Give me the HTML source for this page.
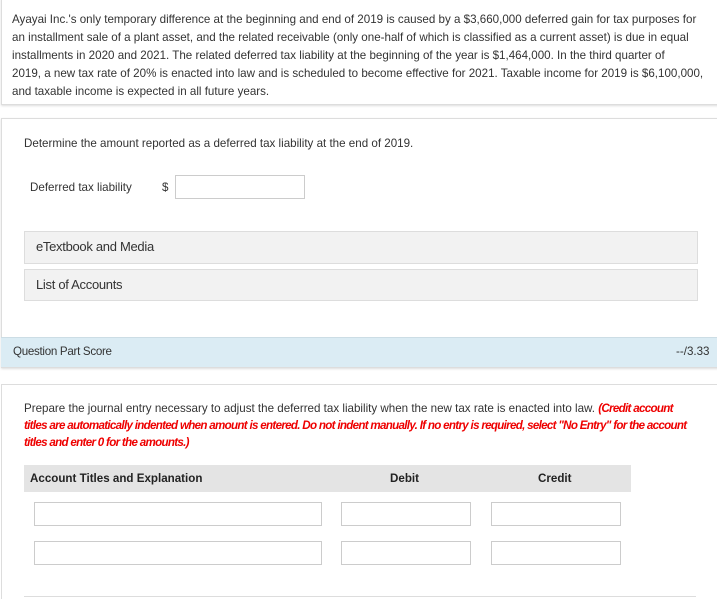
<!DOCTYPE html>
<html><head><style>
html,body{margin:0;height:599px;overflow:hidden}
body{background:#fff;font-family:"Liberation Sans",sans-serif;color:#333;width:717px;position:relative}
.a{position:absolute}
.t{font-size:11.6px;letter-spacing:0;white-space:nowrap}
.box{position:absolute;border:1px solid #ddd;background:#fff}
.inp{position:absolute;border:1px solid #ccc;background:#fff;box-sizing:border-box}
.red{color:#e00;font-style:italic;font-weight:bold;letter-spacing:-0.7px}
</style></head><body>
<div class="box" style="left:1px;top:-2px;width:720px;height:105px;box-shadow:0 1px 2px #ddd"></div>
<div class="a t" style="left:12px;top:11px;line-height:18px">Ayayai Inc.'s only temporary difference at the beginning and end of 2019 is caused by a $3,660,000 deferred gain for tax purposes for<br>an installment sale of a plant asset, and the related receivable (only one-half of which is classified as a current asset) is due in equal<br>installments in 2020 and 2021. The related deferred tax liability at the beginning of the year is $1,464,000. In the third quarter of<br>2019, a new tax rate of 20% is enacted into law and is scheduled to become effective for 2021. Taxable income for 2019 is $6,100,000,<br>and taxable income is expected in all future years.</div>

<div class="box" style="left:1px;top:118px;width:720px;height:248px;box-shadow:0 1px 2px #ddd"></div>
<div class="a t" style="left:24px;top:137px">Determine the amount reported as a deferred tax liability at the end of 2019.</div>
<div class="a t" style="left:30px;top:181px">Deferred tax liability</div>
<div class="a t" style="left:162px;top:181px">$</div>
<div class="inp" style="left:175px;top:175px;width:130px;height:24px"></div>
<div class="a" style="left:24px;top:231px;width:672px;height:31px;background:#f2f2f2;border:1px solid #ddd"></div>
<div class="a t" style="left:36px;top:239px;font-size:13px;letter-spacing:-0.3px">eTextbook and Media</div>
<div class="a" style="left:24px;top:269px;width:672px;height:30px;background:#f2f2f2;border:1px solid #ddd"></div>
<div class="a t" style="left:36px;top:277px;font-size:13px;letter-spacing:-0.3px">List of Accounts</div>
<div class="a" style="left:1px;top:337px;width:720px;height:29px;background:#dbecf4;border-top:1px solid #ccdde5"></div>
<div class="a t" style="left:13px;top:345px;letter-spacing:-0.3px">Question Part Score</div>
<div class="a t" style="left:676px;top:345px">--/3.33</div>

<div class="box" style="left:1px;top:384px;width:720px;height:230px"></div>
<div class="a t" style="left:24px;top:400px;line-height:17px">Prepare the journal entry necessary to adjust the deferred tax liability when the new tax rate is enacted into law. <span class="red">(Credit account</span><br><span class="red">titles are automatically indented when amount is entered. Do not indent manually. If no entry is required, select "No Entry" for the account</span><br><span class="red">titles and enter 0 for the amounts.)</span></div>
<div class="a" style="left:24px;top:465px;width:607px;height:27px;background:#e4e4e4"></div>
<div class="a t" style="left:30px;top:472px;font-weight:bold;color:#222">Account Titles and Explanation</div>
<div class="a t" style="left:390px;top:472px;font-weight:bold;color:#222">Debit</div>
<div class="a t" style="left:538px;top:472px;font-weight:bold;color:#222">Credit</div>
<div class="inp" style="left:34px;top:502px;width:288px;height:24px"></div>
<div class="inp" style="left:341px;top:502px;width:130px;height:24px"></div>
<div class="inp" style="left:491px;top:502px;width:130px;height:24px"></div>
<div class="inp" style="left:34px;top:541px;width:288px;height:24px"></div>
<div class="inp" style="left:341px;top:541px;width:130px;height:24px"></div>
<div class="inp" style="left:491px;top:541px;width:130px;height:24px"></div>
<div class="a" style="left:24px;top:596px;width:672px;height:1px;background:#ddd"></div>
</body></html>
